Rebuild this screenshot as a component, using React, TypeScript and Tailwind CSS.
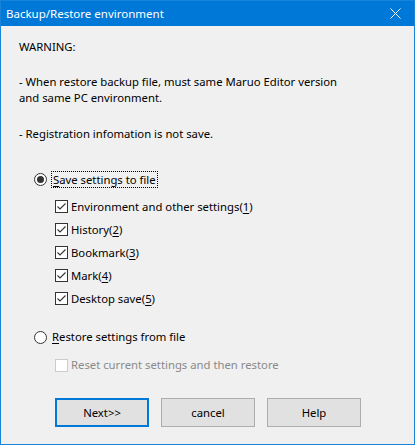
import React from "react";

const font = { fontFamily: '"Noto Sans", "Open Sans", sans-serif' };

function Check({ checked = true, disabled = false }: { checked?: boolean; disabled?: boolean }) {
  return (
    <div
      className={`w-[13px] h-[13px] border flex items-center justify-center bg-white ${
        disabled ? "border-[#cccccc]" : "border-[#333333]"
      }`}
    >
      {checked && (
        <svg width="11" height="11" viewBox="0 0 11 11">
          <path d="M1.5 5.5 L4 8 L9.5 2.5" fill="none" stroke="#333" strokeWidth="1.1" />
        </svg>
      )}
    </div>
  );
}

function Radio({ checked }: { checked: boolean }) {
  return (
    <div className="w-[13px] h-[13px] rounded-full border border-[#333333] bg-white flex items-center justify-center">
      {checked && <div className="w-[7px] h-[7px] rounded-full bg-[#333333]" />}
    </div>
  );
}

function CheckRow({ label, n }: { label: string; n: string }) {
  return (
    <div className="h-[23px] flex items-center pl-[54px]">
      <Check />
      <span className="ml-[3px] text-[#000]">
        {label}(<span className="underline underline-offset-2">{n}</span>)
      </span>
    </div>
  );
}

export default function App() {
  return (
    <div
      className="w-[415px] h-[445px] border border-[#1883d7] bg-[#f0f0f0] flex flex-col text-[11.3px] leading-[16px] text-black"
      style={font}
    >
      <div className="h-[25px] bg-[#0078d7] flex items-center justify-between pl-[5px] pr-[13px] text-white shrink-0 text-[11.5px]">
        <span>Backup/Restore environment</span>
        <svg width="11" height="11" viewBox="0 0 11 11">
          <path d="M0.5 0.5 L10.5 10.5 M10.5 0.5 L0.5 10.5" stroke="white" strokeWidth="1" />
        </svg>
      </div>
      <div className="flex flex-col pl-[18px] pt-[13px]">
        <div className="h-[16px]">WARNING:</div>
        <div className="h-[19px]" />
        <div className="h-[16px]">- When restore backup file, must same Maruo Editor version</div>
        <div className="h-[15px]">and same PC environment.</div>
        <div className="h-[21px]" />
        <div className="h-[16px]">- Registration infomation is not save.</div>
      </div>
      <div className="flex flex-col pt-[28px]">
        <div className="h-[18px] flex items-center pl-[33px]">
          <Radio checked />
          <span className="ml-[4px] px-[1px] border border-dotted border-black leading-[15px]">
            <span className="underline underline-offset-2">S</span>ave settings to file
          </span>
        </div>
        <div className="h-[7px]" />
        <CheckRow label="Environment and other settings" n="1" />
        <CheckRow label="History" n="2" />
        <CheckRow label="Bookmark" n="3" />
        <CheckRow label="Mark" n="4" />
        <CheckRow label="Desktop save" n="5" />
        <div className="h-[18px]" />
        <div className="h-[18px] flex items-center pl-[33px]">
          <Radio checked={false} />
          <span className="ml-[5px]">
            <span className="underline underline-offset-2">R</span>estore settings from file
          </span>
        </div>
        <div className="h-[10px]" />
        <div className="h-[18px] flex items-center pl-[54px] text-[#8a8a8a]">
          <Check checked={false} disabled />
          <span className="ml-[3px]">Reset current settings and then restore</span>
        </div>
      </div>
      <div className="flex pl-[54px] pt-[24px] gap-[12px]">
        <div className="w-[94px] h-[29px] border-2 border-[#0078d7] bg-[#e1e1e1] flex items-center justify-center">
          Next&gt;&gt;
        </div>
        <div className="w-[94px] h-[29px] border border-[#adadad] bg-[#e1e1e1] flex items-center justify-center">
          cancel
        </div>
        <div className="w-[94px] h-[29px] border border-[#adadad] bg-[#e1e1e1] flex items-center justify-center">
          Help
        </div>
      </div>
    </div>
  );
}
